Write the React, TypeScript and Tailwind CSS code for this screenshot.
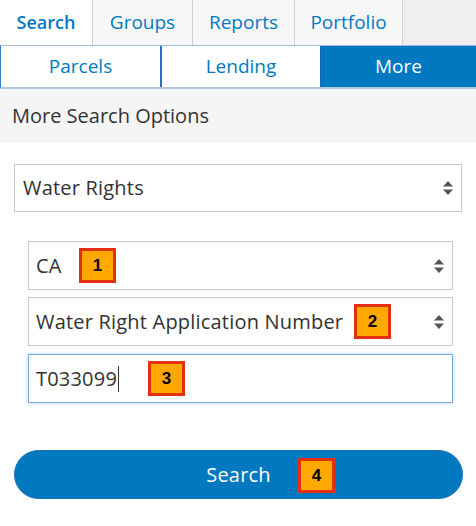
import React from "react";

const font = { fontFamily: "'Open Sans', Lato, sans-serif" };

function UpDown() {
  return (
    <svg width="12" height="18" viewBox="0 0 12 18" className="shrink-0">
      <path d="M6 2 L11 7.5 H1 Z" fill="#555" />
      <path d="M6 16 L11 10.5 H1 Z" fill="#555" />
    </svg>
  );
}

function Badge({ n, className }: { n: string; className: string }) {
  return (
    <div
      className={`absolute w-[37px] h-[35px] bg-[#ffa800] border-[3px] border-[#e2310f] flex items-center justify-center text-[17px] font-bold text-black tracking-normal ${className}`}
      style={{ fontFamily: "'Liberation Sans', Arial, sans-serif" }}
    >
      {n}
    </div>
  );
}

export default function App() {
  const topTabs = [
    { label: "Search", w: "w-[93px]", active: true },
    { label: "Groups", w: "w-[100px]", active: false },
    { label: "Reports", w: "w-[102px]", active: false },
    { label: "Portfolio", w: "w-[108px]", active: false },
  ];

  return (
    <div className="w-[476px] h-[526px] bg-white overflow-hidden text-[#323232]" style={font}>
      {/* Top tabs */}
      <div className="flex h-[45px] bg-[#efefef]">
        {topTabs.map((t) => (
          <div
            key={t.label}
            className={`${t.w} flex items-center justify-center border-r border-[#d0d0d0] text-[#0079c1] ${
              t.active ? "bg-white font-semibold text-[18px]" : "bg-[#f7f7f7] text-[19px]"
            }`}
          >
            {t.label}
          </div>
        ))}
      </div>

      {/* Sub tabs */}
      <div className="flex h-[44px] border-t border-[#a3bcdc] border-b-2 border-b-[#b3c6de] border-l border-l-[#2a7fd0] text-[19px]">
        <div className="w-[159px] flex items-center justify-center text-[#0079c1] bg-white">
          Parcels
        </div>
        <div className="w-[160px] flex items-center justify-center text-[#0079c1] bg-white border-l-2 border-[#1f6fcc]">
          Lending
        </div>
        <div className="flex-1 flex items-center justify-center text-white bg-[#0079c1] border-l border-[#1a65b8]">
          More
        </div>
      </div>

      {/* Section header */}
      <div className="h-[54px] bg-[#f5f5f5] flex items-center pl-[12px] text-[20px] text-[#333]">
        More Search Options
      </div>

      {/* Form */}
      <div className="pt-[21px] px-[14px] text-[20px] tracking-[0.2px]">
        <div className="h-[48px] border border-[#c9c9c9] flex items-center justify-between pl-[8px] pr-[7px]">
          <span>Water Rights</span>
          <UpDown />
        </div>

        <div className="mt-[29px] ml-[14px] mr-[9px] flex flex-col gap-[7px]">
          <div className="relative h-[49px] border border-[#c9c9c9] flex items-center justify-between pl-[7px] pr-[7px]">
            <span>CA</span>
            <UpDown />
            <Badge n="1" className="left-[50px] top-[6px]" />
          </div>
          <div className="relative h-[49px] border border-[#c9c9c9] flex items-center justify-between pl-[7px] pr-[7px]">
            <span>Water Right Application Number</span>
            <UpDown />
            <Badge n="2" className="left-[325px] top-[6px]" />
          </div>
          <div className="relative mt-[1px] h-[49px] border border-[#7aa7e2] shadow-[0_0_4px_rgba(90,150,230,0.45)] flex items-center pl-[7px]">
            <span>T033099</span>
            <span className="inline-block w-[1px] h-[26px] bg-[#333] ml-[1px]" />
            <Badge n="3" className="left-[119px] top-[6px]" />
          </div>
        </div>

        <div className="relative mt-[47px] mr-[-1px] h-[49px] rounded-full bg-[#0079c1] border border-[#1a6fb8] flex items-center justify-center text-white">
          Search
          <Badge n="4" className="left-[283px] top-[7px]" />
        </div>
      </div>
    </div>
  );
}
